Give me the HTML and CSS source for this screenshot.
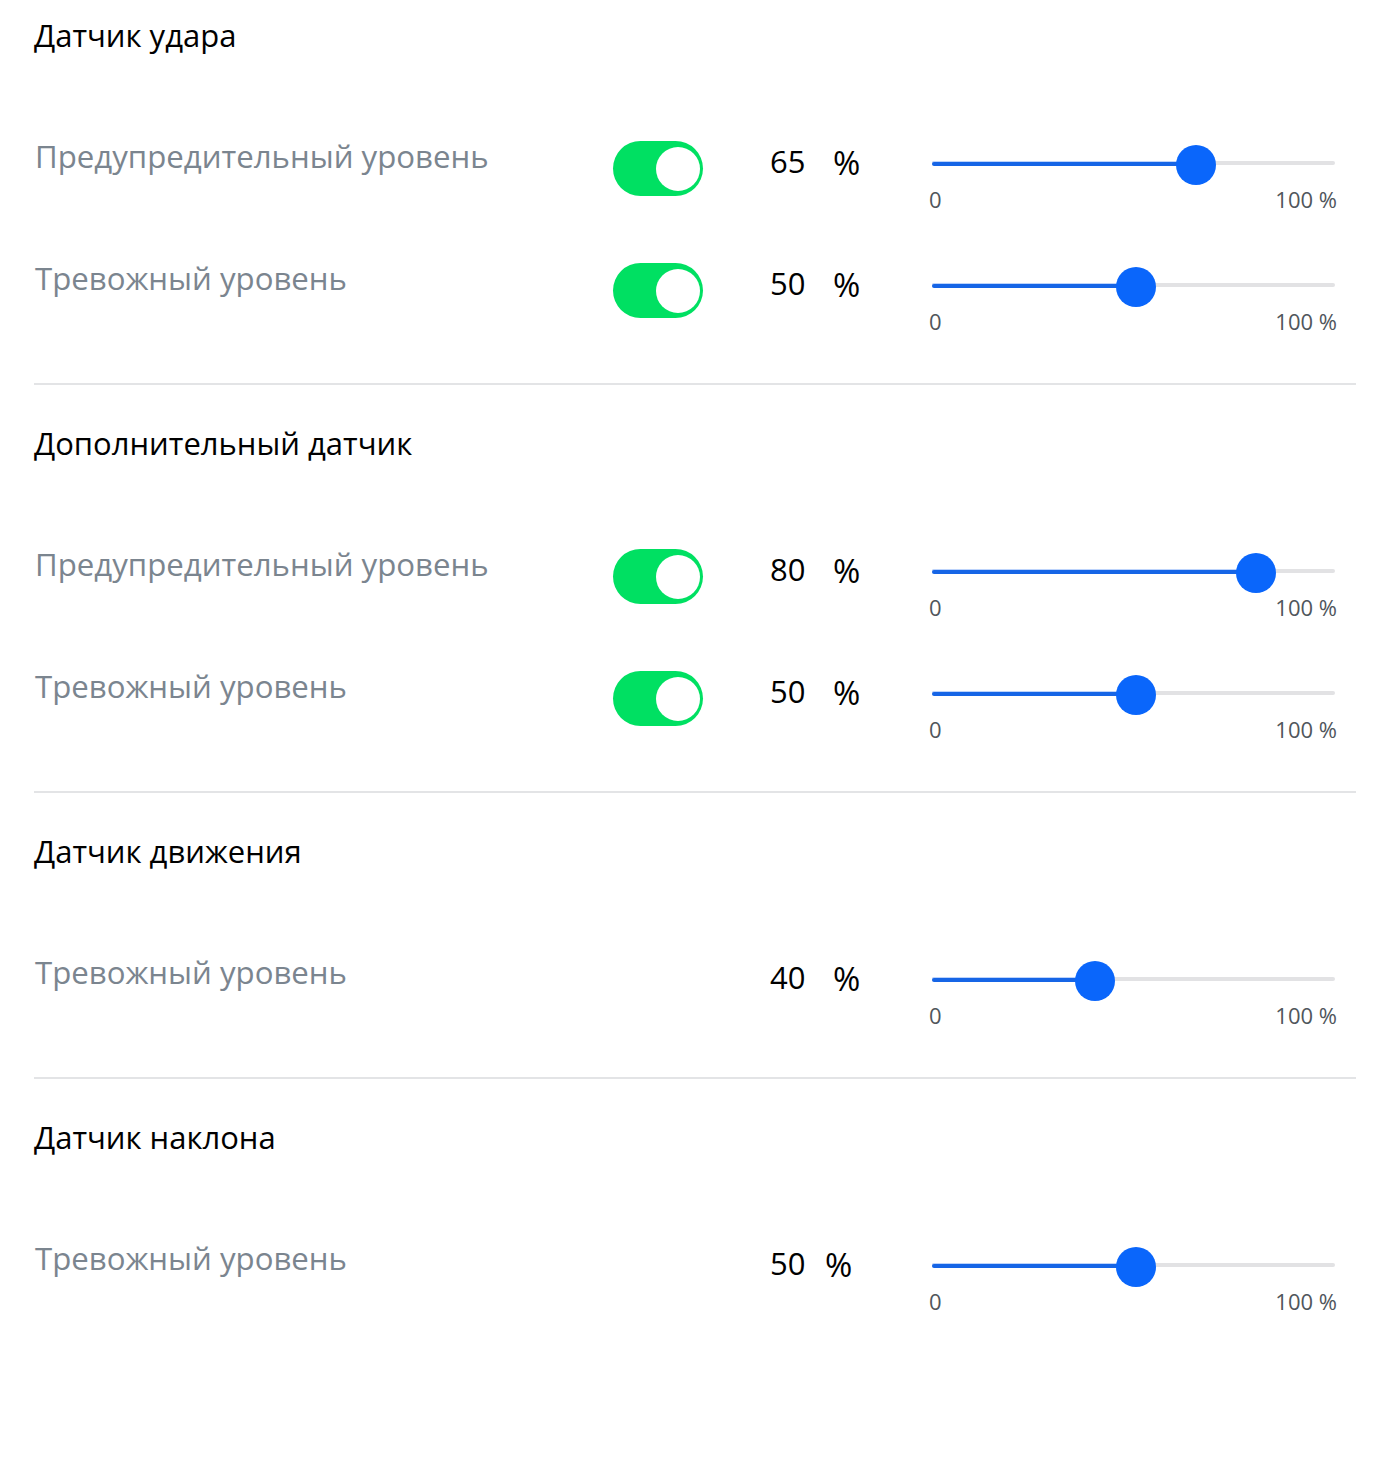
FILE: index.html
```html
<!DOCTYPE html>
<html lang="ru">
<head>
<meta charset="utf-8">
<title>Датчики</title>
<link rel="stylesheet" href="styles.css">
</head>
<body>
<main class="page">
  <section class="section first">
    <h2 class="title">Датчик удара</h2>
    <div class="row">
      <div class="label">Предупредительный уровень</div>
      <div class="toggle"><span class="knob"></span></div>
      <div class="value"><span class="num">65</span><span class="pct">%</span></div>
      <div class="slider">
        <div class="track"><div class="fill" style="width:65%"></div><span class="thumb" style="left:65%"></span></div>
        <div class="scale"><span>0</span><span>100 %</span></div>
      </div>
    </div>
    <div class="row">
      <div class="label">Тревожный уровень</div>
      <div class="toggle"><span class="knob"></span></div>
      <div class="value"><span class="num">50</span><span class="pct">%</span></div>
      <div class="slider">
        <div class="track"><div class="fill" style="width:50%"></div><span class="thumb" style="left:50%"></span></div>
        <div class="scale"><span>0</span><span>100 %</span></div>
      </div>
    </div>
  </section>

  <section class="section">
    <h2 class="title">Дополнительный датчик</h2>
    <div class="row">
      <div class="label">Предупредительный уровень</div>
      <div class="toggle"><span class="knob"></span></div>
      <div class="value"><span class="num">80</span><span class="pct">%</span></div>
      <div class="slider">
        <div class="track"><div class="fill" style="width:80%"></div><span class="thumb" style="left:80%"></span></div>
        <div class="scale"><span>0</span><span>100 %</span></div>
      </div>
    </div>
    <div class="row">
      <div class="label">Тревожный уровень</div>
      <div class="toggle"><span class="knob"></span></div>
      <div class="value"><span class="num">50</span><span class="pct">%</span></div>
      <div class="slider">
        <div class="track"><div class="fill" style="width:50%"></div><span class="thumb" style="left:50%"></span></div>
        <div class="scale"><span>0</span><span>100 %</span></div>
      </div>
    </div>
  </section>

  <section class="section">
    <h2 class="title">Датчик движения</h2>
    <div class="row">
      <div class="label">Тревожный уровень</div>
      <div class="toggle-space"></div>
      <div class="value"><span class="num">40</span><span class="pct">%</span></div>
      <div class="slider">
        <div class="track"><div class="fill" style="width:40%"></div><span class="thumb" style="left:40%"></span></div>
        <div class="scale"><span>0</span><span>100 %</span></div>
      </div>
    </div>
  </section>

  <section class="section last">
    <h2 class="title">Датчик наклона</h2>
    <div class="row">
      <div class="label">Тревожный уровень</div>
      <div class="toggle-space"></div>
      <div class="value tight"><span class="num">50</span><span class="pct">%</span></div>
      <div class="slider">
        <div class="track"><div class="fill" style="width:50%"></div><span class="thumb" style="left:50%"></span></div>
        <div class="scale"><span>0</span><span>100 %</span></div>
      </div>
    </div>
  </section>
</main>
</body>
</html>
```
FILE: styles.css
```css
* { box-sizing: border-box; }

html, body {
  margin: 0;
  padding: 0;
  background: #ffffff;
}

body {
  font-family: "Open Sans", "Noto Sans", sans-serif;
  color: #000000;
}

.page {
  padding: 0 39px 0 34px;
}

.section {
  padding: 40px 0 9px;
  border-bottom: 2px solid #e3e4e6;
}

.section.first {
  padding-top: 17px;
}

.section.last {
  border-bottom: none;
}

.title {
  margin: 0 0 77px;
  font-size: 31px;
  line-height: 36px;
  font-weight: 400;
  color: #000000;
}

.row {
  display: flex;
  align-items: flex-start;
  height: 122px;
}

.label {
  width: 579px;
  flex: none;
  margin-top: 8px;
  font-size: 31.2px;
  line-height: 36px;
  color: #7b858f;
  padding-left: 1px;
}

.toggle {
  flex: none;
  width: 90px;
  height: 55px;
  margin-top: 11px;
  border-radius: 28px;
  background: #00e062;
  display: flex;
  align-items: center;
  justify-content: flex-end;
  padding-right: 3px;
}

.toggle .knob {
  width: 44px;
  height: 44px;
  border-radius: 50%;
  background: #ffffff;
}

.toggle-space {
  flex: none;
  width: 90px;
}

.value {
  flex: none;
  width: 159px;
  margin-left: 67px;
  margin-top: 13px;
  display: flex;
  align-items: baseline;
  font-size: 31px;
  line-height: 36px;
  color: #000000;
}

.value .num {
  width: 63px;
}

.value .pct {
  font-size: 33px;
  position: relative;
  top: 2px;
}

.value.tight .num {
  width: 55px;
}

.slider {
  flex: none;
  width: 408px;
  margin-top: 14px;
}

.track {
  position: relative;
  height: 40px;
  margin: 0 2px 0 3px;
}

.track::before {
  content: "";
  position: absolute;
  left: 0;
  right: 0;
  top: 17px;
  height: 4px;
  border-radius: 2px;
  background: #e2e2e4;
}

.fill {
  position: absolute;
  left: 0;
  top: 18px;
  height: 4px;
  border-radius: 2px;
  background: #1665e6;
  box-shadow: 0 -1px 0 #bcd3fb;
}

.thumb {
  position: absolute;
  top: 1px;
  width: 40px;
  height: 40px;
  margin-left: -18px;
  border-radius: 50%;
  background: #0a66fb;
}

.scale {
  display: flex;
  justify-content: space-between;
  margin-top: 3px;
  font-size: 22px;
  line-height: 24px;
  color: #50565c;
}
```
